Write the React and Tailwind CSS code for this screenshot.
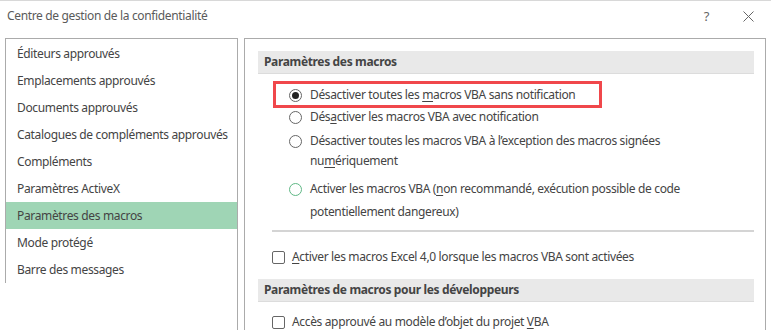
import React from "react";

const font = { fontFamily: '"Noto Sans", "Open Sans", sans-serif' };

function Radio({ checked, green }) {
  return (
    <span
      className={`inline-flex items-center justify-center w-[13px] h-[13px] rounded-full border shrink-0 bg-white ${
        green ? "border-[#5fb885]" : "border-[#666666]"
      }`}
    >
      {checked && <span className="w-[7px] h-[7px] rounded-full bg-[#222222]" />}
    </span>
  );
}

function Check() {
  return <span className="inline-block w-[13px] h-[13px] rounded-[2px] border border-[#666666] shrink-0 bg-white" />;
}

const leftItems = [
  "Éditeurs approuvés",
  "Emplacements approuvés",
  "Documents approuvés",
  "Catalogues de compléments approuvés",
  "Compléments",
  "Paramètres ActiveX",
  "Paramètres des macros",
  "Mode protégé",
  "Barre des messages",
];

export default function App() {
  return (
    <div
      className="w-[771px] h-[330px] bg-white overflow-hidden relative text-[#444444] text-[12px] tracking-[-0.35px] flex flex-col whitespace-nowrap"
      style={font}
    >
      {/* title bar */}
      <div className="h-[38px] flex items-start pt-[6px] pl-[7px] pr-[17px] shrink-0 border-t border-[#d8d8d8]">
        <span className="text-[#5a5a5a] text-[12px] leading-[18px]">Centre de gestion de la confidentialité</span>
        <span className="ml-auto text-[#666666] text-[13px] leading-[18px] mr-[34px]">?</span>
        <svg width="11" height="11" viewBox="0 0 11 11" className="mt-[4px]">
          <path d="M0.5 0.5 L10.5 10.5 M10.5 0.5 L0.5 10.5" stroke="#666666" strokeWidth="1" />
        </svg>
      </div>

      <div className="flex flex-1 pl-[5px] gap-[6px]">
        {/* left panel */}
        <div className="w-[233px] border-t border-r border-[#ababab] flex flex-col">
          <div className="border-l border-[#ababab] pt-[1px]">
            {leftItems.map((t) => (
              <div
                key={t}
                className={`h-[27px] flex items-center pl-[11px] leading-none ${
                  t === "Paramètres des macros" ? "bg-[#9fd5b5]" : ""
                }`}
              >
                {t}
              </div>
            ))}
          </div>
        </div>

        {/* right panel */}
        <div className="w-[522px] border-t border-l border-r border-[#ababab] pl-[13px] pr-[11px] pt-[12px] relative">
          <div className="h-[23px] bg-[#e9e9e9] flex items-center pl-[6px] font-bold text-[#444444] border-b border-[#dcdcdc]">
            Paramètres des macros
          </div>

          <div className="pl-[31px] pt-[10px]">
            <div className="h-[22px] flex items-center gap-[8px]">
              <Radio checked />
              <span>
                Désactiver toutes les <span className="underline underline-offset-2">m</span>acros VBA sans notification
              </span>
            </div>
            <div className="h-[22px] flex items-center gap-[8px]">
              <Radio />
              <span>
                Dés<span className="underline underline-offset-2">a</span>ctiver les macros VBA avec notification
              </span>
            </div>
            <div className="flex gap-[8px] pt-[3px]">
              <span className="mt-[4px]">
                <Radio />
              </span>
              <span className="leading-[20px]">
                Désactiver toutes les macros VBA à l’exception des macros signées
                <br />
                nu<span className="underline underline-offset-2">m</span>ériquement
              </span>
            </div>
            <div className="flex gap-[8px] pt-[6px]">
              <span className="mt-[6px]">
                <Radio green />
              </span>
              <span className="leading-[23px]">
                Activer les macros VBA (<span className="underline underline-offset-2">n</span>on recommandé, exécution possible de code
                <br />
                potentiellement dangereux)
              </span>
            </div>
          </div>

          <div className="ml-[14px] mt-[7px] h-[2px] bg-[#d4d4d4]" />

          <div className="pl-[14px] pt-[14px] flex items-center gap-[7px] h-[36px]">
            <Check />
            <span>
              <span className="underline underline-offset-2">A</span>ctiver les macros Excel 4,0 lorsque les macros VBA sont activées
            </span>
          </div>

          <div className="mt-[11px] h-[23px] bg-[#e9e9e9] flex items-center pl-[6px] font-bold text-[#444444] border-b border-[#dcdcdc]">
            Paramètres de macros pour les développeurs
          </div>

          <div className="pl-[14px] pt-[11px] flex items-center gap-[7px]">
            <Check />
            <span>
              Accès approuvé au modèle d’objet du projet <span className="underline underline-offset-2">V</span>BA
            </span>
          </div>

          {/* red annotation box */}
          <div className="absolute left-[28px] top-[42px] w-[329px] h-[27px] border-[3px] border-[#f0474b] pointer-events-none" />
        </div>
      </div>
    </div>
  );
}
